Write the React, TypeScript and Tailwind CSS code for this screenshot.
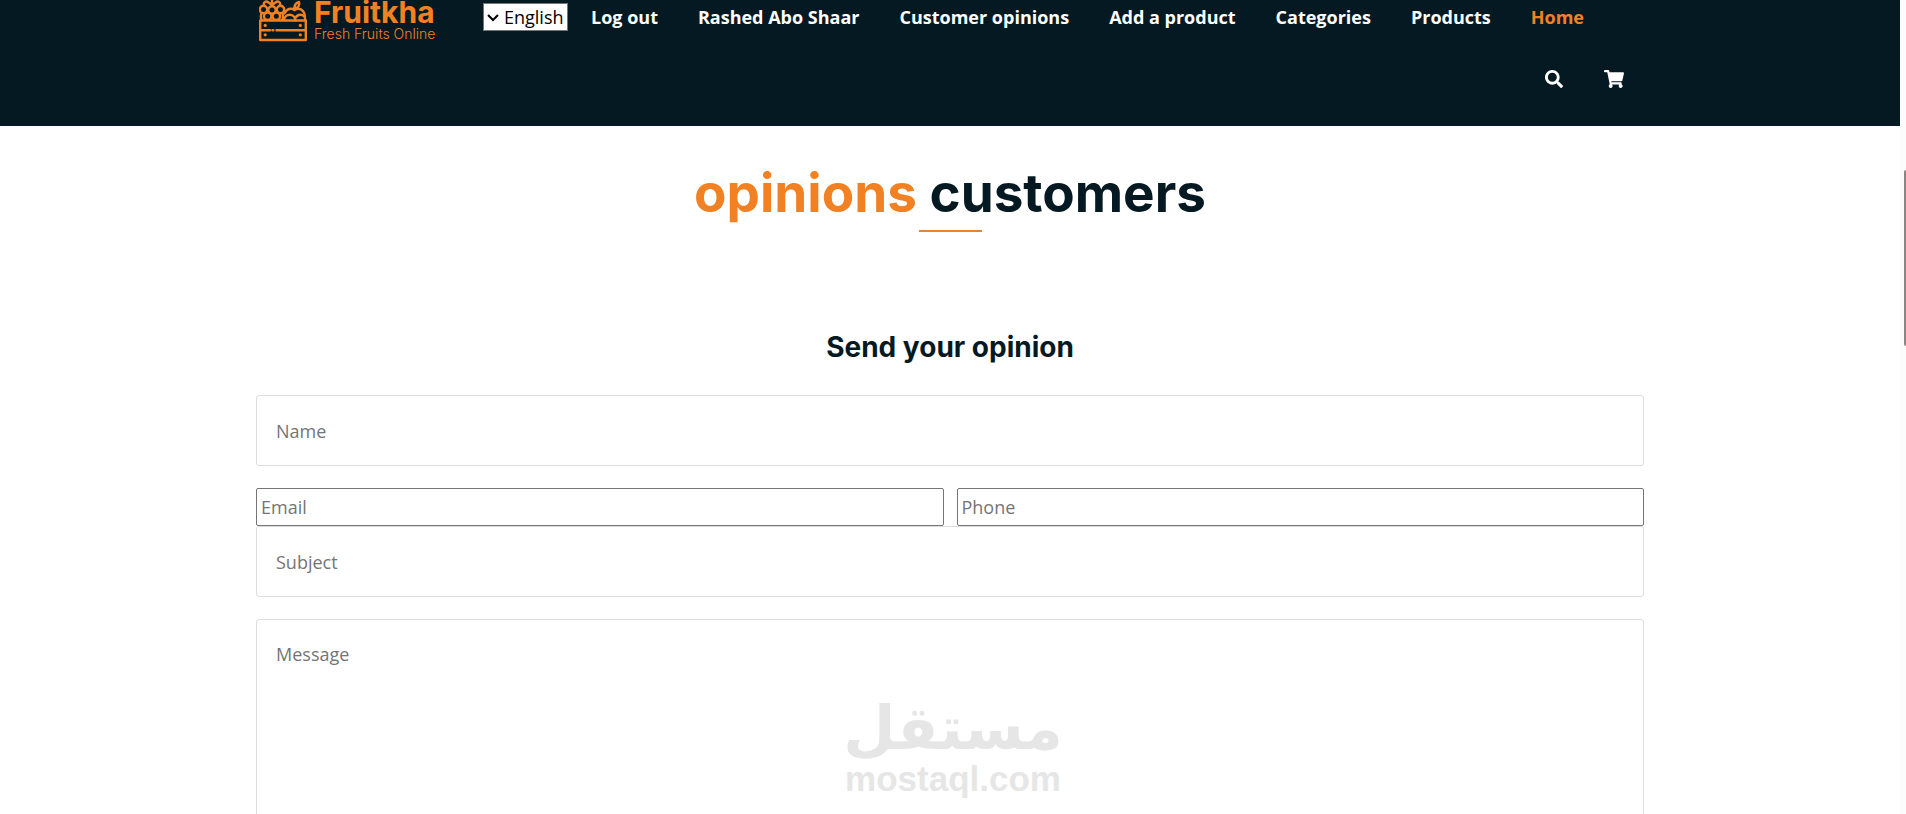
import { FaSearch, FaShoppingCart } from 'react-icons/fa'

const navItems = [
  { label: 'Log out', href: '#logout' },
  { label: 'Rashed Abo Shaar', href: '#profile' },
  { label: 'Customer opinions', href: '#opinions' },
  { label: 'Add a product', href: '#add' },
  { label: 'Categories', href: '#categories' },
  { label: 'Products', href: '#products' },
  { label: 'Home', href: '#home', active: true },
]

const boxedField =
  'block w-full rounded-[3px] border border-[#dddddd] px-[19px] text-[18px] placeholder:text-[#757575] outline-none'
const plainField =
  'block h-[38px] w-full rounded-[2px] border border-[#767676] px-1 text-[18px] placeholder:text-[#757575] outline-none'

function CrateIcon() {
  return (
    <svg
      viewBox="0 0 48 42"
      className="h-[42px] w-12 shrink-0"
      fill="none"
      stroke="#f28123"
      strokeWidth="2.4"
      strokeLinecap="round"
      strokeLinejoin="round"
      aria-hidden="true"
    >
      <rect x="1.2" y="20.5" width="45.6" height="19.5" />
      <path d="M1 30.3h10M13.5 30.3h.8M17.5 30.3H47" />
      <circle cx="4.5" cy="9.5" r="3.7" />
      <circle cx="13" cy="10" r="3.7" />
      <circle cx="21.5" cy="9.5" r="3.7" />
      <circle cx="8.7" cy="16.2" r="3.7" />
      <circle cx="17.3" cy="16.2" r="3.7" />
      <path d="M5 5.5C4 2 7 .5 9.500 2.500M21 5.500C22 2 19 .5 16.500 2.500M9.500 2.500L13 5l3.500-2.500M13 5V-1M2.500 13.500c-1 2.500-.8 4.500.2 6.500M23.500 13.500c.8 2.500.6 4.500-.3 6.500" />
      <path d="M25.500 13.500C27 10.500 29.500 8.800 32 8.800c1.500 0 2.500.5 3.500 1.200 1.200-.7 2.300-1.200 3.800-1.200 4 0 6.700 3.800 6.700 8" />
      <path d="M25 20c.4-3.400 3-5.300 5.700-5.300S36 16.600 36.400 20M36.400 18c1-2.200 2.900-3.300 4.900-3.300 3 0 5 2.200 5 5.300" />
      <path d="M35.500 10c-.5-4 .5-7 4.500-8 .8 3-.4 5.600-4.300 6.500" />
      <g fill="#f28123" stroke="none">
        <circle cx="6.2" cy="25.4" r="1.6" />
        <circle cx="41.3" cy="25.4" r="1.6" />
        <circle cx="6.2" cy="34.8" r="1.6" />
        <circle cx="41.3" cy="34.8" r="1.6" />
      </g>
    </svg>
  )
}

function Logo() {
  return (
    <a href="#home" className="flex w-[180px] shrink-0 gap-[7px] pl-[3px] text-[#f28123]">
      <CrateIcon />
      <span className="flex flex-col font-['Inter','Open_Sans',sans-serif] whitespace-nowrap">
        <span className="text-[30px] leading-[25px] font-bold">Fruitkha</span>
        <span className="text-[14px] leading-[18px] font-light">Fresh Fruits Online</span>
      </span>
    </a>
  )
}

function LanguageSelect() {
  return (
    <div className="relative mt-[3px] h-7 w-[85px] shrink-0">
      <select
        aria-label="Language"
        className="h-full w-full appearance-none border border-[#767676] bg-white pl-5 text-[18px] leading-[24px] text-black"
      >
        <option>English</option>
        <option>Arabic</option>
      </select>
      <svg
        viewBox="0 0 12 8"
        className="pointer-events-none absolute top-[11px] left-1 h-2 w-3"
        fill="none"
        stroke="#000"
        strokeWidth="2"
        aria-hidden="true"
      >
        <path d="M1 1l5 5 5-5" />
      </svg>
    </div>
  )
}

function Header() {
  return (
    <header className="bg-[#051922] px-4 pb-[38px]">
      <div className="mx-auto flex max-w-[1388px] items-start">
        <Logo />
        <div className="ml-[47px] grow">
          <nav className="flex items-start">
            <LanguageSelect />
            <ul className="ml-[23px] flex gap-10">
              {navItems.map((item) => (
                <li key={item.label}>
                  <a
                    href={item.href}
                    className={`block text-[18px] leading-[35px] font-bold whitespace-nowrap ${item.active ? 'text-[#f28123]' : 'text-white'}`}
                  >
                    {item.label}
                  </a>
                </li>
              ))}
            </ul>
          </nav>
          <div className="mt-[35px] flex justify-end gap-[41px] pr-5 text-white">
            <button type="button" aria-label="Search">
              <FaSearch className="size-[18px]" />
            </button>
            <a href="#cart" aria-label="Cart">
              <FaShoppingCart className="h-[18px] w-5" />
            </a>
          </div>
        </div>
      </div>
    </header>
  )
}

function Watermark() {
  return (
    <div className="pointer-events-none absolute inset-x-0 top-[74px] flex flex-col items-center pl-[6px] text-[#e6e6e6]">
      <span
        lang="ar"
        dir="rtl"
        className="font-['DejaVu_Sans',sans-serif] text-[60px] leading-[70px] font-bold"
      >
        مستقل
      </span>
      <span className="font-['Liberation_Sans',sans-serif] text-[35px] leading-[32px] font-bold">
        mostaql.com
      </span>
    </div>
  )
}

function OpinionForm() {
  return (
    <form>
      <input type="text" aria-label="Name" placeholder="Name" className={`${boxedField} h-[71px]`} />
      <div className="mt-[22px] grid grid-cols-2 gap-[13px]">
        <input type="email" aria-label="Email" placeholder="Email" className={plainField} />
        <input type="tel" aria-label="Phone" placeholder="Phone" className={plainField} />
      </div>
      <input type="text" aria-label="Subject" placeholder="Subject" className={`${boxedField} h-[71px]`} />
      <div className="relative mt-[22px]">
        <textarea
          aria-label="Message"
          placeholder="Message"
          rows={10}
          className={`${boxedField} resize-none py-[21px] leading-[26px]`}
        />
        <Watermark />
      </div>
    </form>
  )
}

export default function App() {
  return (
    <div className="flex h-screen overflow-hidden bg-white font-['Open_Sans','Noto_Sans',sans-serif]">
      <div className="min-w-0 grow">
        <Header />
        <main className="px-4">
          <div className="mx-auto max-w-[1388px] font-['Inter','Open_Sans',sans-serif] font-bold text-[#051922]">
            <h1 className="pt-8 pb-[2px] text-center text-[53px] leading-[70px]">
              <span className="text-[#f28123]">opinions</span> customers
            </h1>
            <div className="mx-auto h-[2px] w-[63px] bg-[#f28123]" />
            <h2 className="mt-[95px] text-center text-[28px] leading-[40px]">Send your opinion</h2>
          </div>
          <div className="mx-auto mt-7 max-w-[1388px]">
            <OpinionForm />
          </div>
        </main>
      </div>
      {/* scroll track */}
      <div className="w-[6px] shrink-0 bg-[#fcfcfc] pt-[170px]">
        <div className="ml-1 h-[176px] rounded-l-[2px] bg-[#8b8583]" />
      </div>
    </div>
  )
}
